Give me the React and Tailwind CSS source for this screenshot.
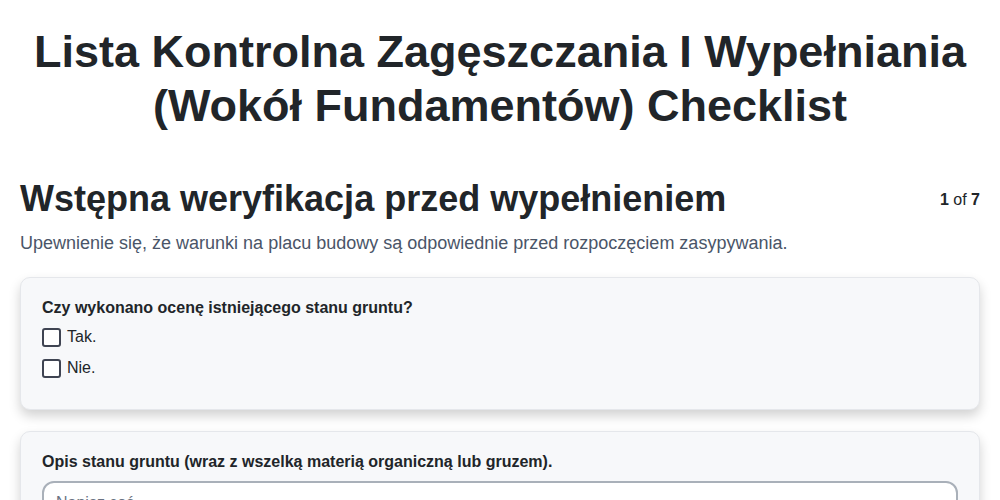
import React, { useState } from 'react';

const options = ["Tak.", "Nie."];

const App = () => {
  const [answer, setAnswer] = useState(null);
  const [note, setNote] = useState("");

  return (
    <div className="min-h-screen bg-white px-5 text-[#212529]" style={{ fontFamily: '"Liberation Sans", Arial, sans-serif' }}>
      {/* TITLE */}
      <h1 className="pt-[25px] text-center text-[45px] font-bold leading-[54px]">
        Lista Kontrolna Zagęszczania I Wypełniania (Wokół Fundamentów) Checklist
      </h1>

      {/* SECTION HEADER */}
      <div className="mt-[43px] flex items-start justify-between">
        <h2 className="text-4xl font-bold leading-[46px]">Wstępna weryfikacja przed wypełnieniem</h2>
        <div className="pt-[12px] text-base leading-6">
          <span className="font-bold">1</span> of <span className="font-bold">7</span>
        </div>
      </div>
      <p className="mt-2 text-lg leading-[27px] text-[#4a5568]">
        Upewnienie się, że warunki na placu budowy są odpowiednie przed rozpoczęciem zasypywania.
      </p>

      {/* CARDS */}
      <div className="mt-5 flex flex-col gap-[21px] pb-10">
        <div className="rounded-[10px] border border-gray-200 bg-[#f7f8fa] px-[21px] pt-[18px] pb-[29px] shadow-[0_6px_12px_rgba(0,0,0,0.18)]">
          <p className="text-base font-bold leading-6">Czy wykonano ocenę istniejącego stanu gruntu?</p>
          <div className="mt-[5px] flex flex-col gap-[7px]">
            {options.map((o) => (
              <label key={o} className="flex h-6 cursor-pointer items-center gap-[6px] text-base">
                <span
                  onClick={() => setAnswer(o)}
                  className={`h-[19px] w-[19px] rounded-[3px] border-2 border-[#3f4452] ${answer === o ? 'bg-[#3f4452]' : 'bg-white'}`}
                />
                <span onClick={() => setAnswer(o)}>{o}</span>
              </label>
            ))}
          </div>
        </div>

        <div className="rounded-[10px] border border-gray-200 bg-[#f7f8fa] px-[21px] pt-[18px] pb-6 shadow-[0_6px_12px_rgba(0,0,0,0.18)]">
          <p className="text-base font-bold leading-6">Opis stanu gruntu (wraz z wszelką materią organiczną lub gruzem).</p>
          <textarea
            value={note}
            onChange={(e) => setNote(e.target.value)}
            placeholder="Napisz coś..."
            rows={3}
            className="mt-[7px] block w-full resize-none rounded-xl border-2 border-[#a9b0b9] bg-white px-3 py-2 text-base placeholder:text-gray-500 focus:outline-none"
          />
        </div>
      </div>
    </div>
  );
};

export default App;
